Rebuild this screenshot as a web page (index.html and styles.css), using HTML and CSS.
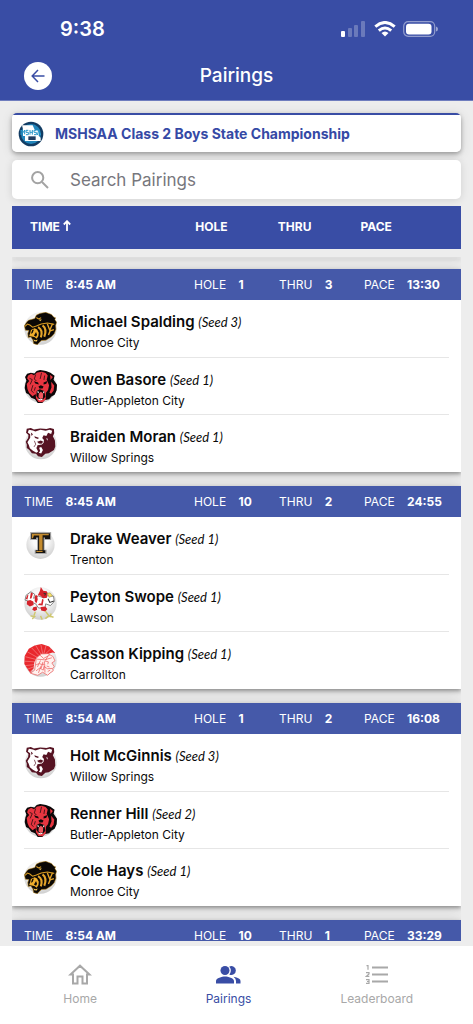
FILE: index.html
```html
<!DOCTYPE html>
<html lang="en">
<head>
<meta charset="utf-8">
<meta name="viewport" content="width=device-width, initial-scale=1">
<title>Pairings</title>
<link rel="stylesheet" href="styles.css">
</head>
<body>
<svg class="defs" aria-hidden="true">
  <defs>
    <radialGradient id="disc" cx="50%" cy="35%" r="65%">
      <stop offset="0.4" stop-color="#fafafa"/><stop offset="1" stop-color="#cfcfcf"/>
    </radialGradient>
    <symbol id="panther" viewBox="0 0 96 96">
      <circle cx="48" cy="48" r="47" fill="url(#disc)"/>
      <path fill="#0b0806" stroke="#c8921f" stroke-width="1.500" d="M1 40L8 29 13 24 31 19 36 9 46 4 63 1 80 7 87 15 92 17 90 22 95 30 92 39 93 50 88 63 80 72 64 82 51 83 43 90 39 95 28 92 26 82 20 73 12 74 11 62 14 54 4 53Z"/>
      <path fill="#f0ae2c" d="M20 52L31 47 38 51 43 60 42 70 37 78 30 73 22 71 15 70 18 61Z"/>
      <path fill="#0b0806" d="M24 52L29 51 25 61 20 63ZM29 68L35 58 38 66 35 72Z"/>
      <path fill="none" stroke="#e5a52a" stroke-width="6" d="M41 44Q56 52 49 74M54 39Q68 50 59 72"/>
      <path fill="none" stroke="#e5a52a" stroke-width="4" d="M68 35L75 53 83 34M71 67L76 55 87 51"/>
      <path fill="none" stroke="#d99c22" stroke-width="3" d="M3 42L10 35 17 38 25 44 36 41 50 35 68 32 88 36M36 16L42 20 50 17"/>
      <path fill="#f6c453" d="M43 22L52 22 47 27ZM27 79L33 82 40 80 37 86 30 85Z"/>
    </symbol>
    <symbol id="redbear" viewBox="0 0 96 96">
      <circle cx="48" cy="48" r="47" fill="url(#disc)"/>
      <path fill="#0c0708" d="M20 8L30 10 37 3 47 0 64 3 77 8 89 17 86 28 96 43 95 59 89 72 80 77 73 85 59 88 52 98 40 96 32 85 21 81 14 71 6 67 2 52 4 39 7 31 3 20 9 11Z"/>
      <path fill="#e83540" d="M12 16L21 11 29 15 38 7 52 5 63 9 69 16 66 28 73 44 70 58 64 66 63 86 54 94 42 93 35 82 34 70 25 76 15 67 10 55 8 41 15 32 9 24Z"/>
      <path fill="#e83540" d="M76 14L84 20 77 29ZM79 34L88 45 86 60 79 69 74 66 80 51Z"/>
      <path fill="#0c0708" d="M29 33L41 36 43 42 33 39ZM57 36L68 32 65 40 57 42ZM42 48L49 44 57 48 54 54 45 54ZM37 61L46 56 59 61 62 78 54 87 43 85 36 75Z"/>
      <path fill="none" stroke="#0c0708" stroke-width="2" d="M34 13L30 26 36 32M51 8L47 26M60 16L58 29M16 24L24 28 18 42M26 44L21 60 28 66M33 50L30 60"/>
      <path fill="#f15960" d="M43 68L49 63 56 68 55 82 48 84 42 79Z"/>
      <path fill="none" stroke="#fff" stroke-width="3" d="M40 62L42 67M58 62L57 67M42 84L46 87 54 85"/>
    </symbol>
    <symbol id="maroonbear" viewBox="0 0 96 96">
      <circle cx="49" cy="48" r="46" fill="url(#disc)"/>
      <path fill="#561322" d="M8 5L20 3 29 7 47 4 65 6 76 3 87 6 88 18 84 27 90 39 91 57 87 67 72 76 62 78 52 87 41 85 35 78 23 76 15 66 8 61 8 51 5 43 12 32 13 23 6 17Z"/>
      <path fill="#fff" d="M14 8L26 10 33 13 48 8 63 11 74 8 82 11 79 20 70 17 65 26 57 24 53 32 58 38 57 46 49 54 40 53 36 61 41 71 36 75 26 69 17 62 14 52 10 44 18 31 18 21 11 16Z"/>
      <path fill="#561322" d="M30 27L43 31 41 35 32 32ZM58 29L69 26 65 33 58 35ZM38 43L49 39 56 43 51 49 43 48ZM39 54L50 51 58 56 52 61 43 61ZM20 16L26 21 22 26Z"/>
      <path fill="#fff" d="M44 60L50 58 55 67 50 77 43 75 47 70ZM67 31L70 40 65 35Z"/>
      <path fill="none" stroke="#561322" stroke-width="2" d="M30 40L34 50 29 58"/>
    </symbol>
    <symbol id="lettert" viewBox="0 0 96 96">
      <circle cx="48" cy="46" r="41" fill="url(#disc)"/>
      <path fill="#aaa" d="M18 9H79V32H60V60H66V73H31V60H38V32H18Z"/>
      <path fill="#171411" d="M21 12H76V29H61V25H57V62H62V70H34V62H41V25H35V29H21Z"/>
      <path fill="#c38a2d" d="M23 14H72V18H54V62H44V19H29L26 27H23ZM36 64H54V67H36Z"/>
    </symbol>
    <symbol id="cardinal" viewBox="0 0 96 96">
      <circle cx="48" cy="48" r="47" fill="url(#disc)"/>
      <path fill="#fff" stroke="#555" stroke-width="2" d="M6 24L20 14 31 21 28 33 42 26 58 32 70 25 86 27 88 42 77 54 63 49 61 62 42 61 34 49 15 42 3 38Z"/>
      <path fill="#d5232b" d="M49 0L56 11 66 12 69 18 66 32 55 32 47 25 40 24 46 12ZM9 25L13 22 10 36 5 35ZM20 16L26 19 22 33 17 34ZM18 38L27 42 28 52 17 57 8 50 9 41ZM32 25L38 24 40 36 36 48 31 41ZM53 34L57 37 54 54 40 52 46 47 50 49ZM27 59L37 57 38 66 31 70 24 66ZM48 58L62 57 68 64 62 71 50 68Z"/>
      <path fill="#f6df67" stroke="#5c5120" stroke-width="1" d="M67 18L76 17 83 26 73 30Z"/>
      <path fill="none" stroke="#cfc76c" stroke-width="4" d="M33 72L29 83M62 70L72 83M19 84L31 86 24 93M62 92L72 84 86 88M79 77L75 88M48 84L53 95"/>
      <path fill="none" stroke="#303030" stroke-width="3" d="M57 18L63 20 60 25M70 34L75 45 87 41"/>
    </symbol>
    <symbol id="trojan" viewBox="0 0 96 96">
      <circle cx="48" cy="48" r="47" fill="url(#disc)"/>
      <path fill="#e9282d" d="M1 58L2 35 14 14 31 4 51 0 73 7 91 26 83 25 69 29 52 28 37 39 30 54 28 71 18 84Z"/>
      <path fill="none" stroke="#ffe4e2" stroke-width="1" d="M2 50L33 52M4 37L35 45M10 23L39 39M22 11L44 34M34 4L49 29M49 2L54 27M64 5L58 27M78 14L64 27M3 63L30 60M8 74L30 66M15 82L31 71"/>
      <path fill="#fff2ef" stroke="#ef5a5a" stroke-width="2" d="M36 41L50 29 69 28 84 36 90 49 81 55 88 66 83 71 85 78 76 84 69 91 54 82 40 91 19 85 31 76Z"/>
      <path fill="none" stroke="#ed5555" stroke-width="2" d="M38 44L60 46 81 40M46 32L57 42 75 32M34 61L44 57 57 61 61 49 71 52 69 59M35 78L46 70 56 76 58 65 68 72 82 71M66 64L74 67M60 57L61 83M48 48L39 67M50 63L42 84M69 80L76 76M70 34L63 47M55 52L50 71"/>
    </symbol>
  </defs>
</svg>

<div class="app">
  <header class="topbar">
    <div class="status">
      <span class="clock">9:38</span>
      <div class="status-icons">
        <svg width="26" height="16" viewBox="0 0 26 16" fill="#fff" aria-hidden="true"><rect x="0" y="10" width="4" height="6" rx="1"/><g opacity=".25"><rect x="7" y="7" width="4" height="9" rx="1"/><rect x="13" y="4" width="4" height="12" rx="1"/><rect x="20" y="0" width="4" height="16" rx="1"/></g></svg>
        <svg class="wifi" width="22" height="16" viewBox="0 0 22 16" aria-hidden="true"><g fill="none" stroke="#fff" stroke-width="3"><path d="M1.300 5.600Q11-2.600 20.700 5.600"/><path d="M4.800 9.600Q11 4.400 17.200 9.600"/></g><path fill="#fff" d="M11 15.500L7.500 12Q11 9 14.500 12Z"/></svg>
        <svg width="36" height="16" viewBox="0 0 36 16" aria-hidden="true"><rect x=".7" y=".7" width="31" height="14.600" rx="4.500" fill="none" stroke="#fff" stroke-opacity=".45" stroke-width="1.200"/><rect x="3" y="2.700" width="25.500" height="10.800" rx="3" fill="#fff"/><path d="M33 5.500Q35 6 35 8T33 10.500Z" fill="#fff" opacity=".5"/></svg>
      </div>
    </div>
    <div class="titlebar">
      <button class="back" type="button" aria-label="Back"><svg width="14" height="14" viewBox="0 0 14 14" fill="none" stroke="#394da5" stroke-width="1.500"><path d="M13.500 7H1.500M7 1L1.200 7 7 13"/></svg></button>
      <h1>Pairings</h1>
    </div>
  </header>

  <main class="content">
    <a class="event" href="#event">
      <svg width="26" height="26" viewBox="0 0 78 78" aria-hidden="true"><circle cx="39" cy="39" r="37" fill="#123c63"/><circle cx="39" cy="39" r="30" fill="#2286bb"/><path fill="#fff" d="M12 13H44L50 26 62 30 62 44 68 50V60H21V45H15V25Z"/><path fill="#203c60" d="M31 46H53V57H31Z"/><path fill="none" stroke="#2796c9" stroke-width="3" d="M9 42V27L15 35 20 27V40M31 28H24V34H31V41H24M36 27V41M36 34H43M43 27V41M55 28H48V34H55V41H48M58 42L62 28 68 42"/></svg>
      <span>MSHSAA Class 2 Boys State Championship</span>
    </a>
    <label class="search">
      <svg width="18" height="18" viewBox="0 0 18 18" fill="none" stroke="#a3a3a3" stroke-width="2" aria-hidden="true"><circle cx="6.700" cy="6.700" r="5.600"/><path d="M11 11L17 17"/></svg>
      <input type="search" placeholder="Search Pairings" aria-label="Search Pairings">
    </label>
    <div class="columns">
      <button type="button">TIME<svg width="8" height="12" viewBox="0 0 8 12" fill="none" stroke="#fff" stroke-width="1.800" aria-hidden="true"><path d="M4 11V1.500M.8 4.500L4 1.200 7.200 4.500"/></svg></button>
      <button type="button">HOLE</button><button type="button">THRU</button><button type="button">PACE</button>
    </div>

    <div class="list">
      <div class="card-end"></div>
      <section class="card">
        <div class="facts"><span>TIME <b>8:45 AM</b></span><span>HOLE <b>1</b></span><span>THRU <b>3</b></span><span>PACE <b>13:30</b></span></div>
        <ul>
          <li><svg class="logo"><use href="#panther"/></svg><div><h2>Michael Spalding <em>(Seed 3)</em></h2><p>Monroe City</p></div></li>
          <li><svg class="logo"><use href="#redbear"/></svg><div><h2>Owen Basore <em>(Seed 1)</em></h2><p>Butler-Appleton City</p></div></li>
          <li><svg class="logo"><use href="#maroonbear"/></svg><div><h2>Braiden Moran <em>(Seed 1)</em></h2><p>Willow Springs</p></div></li>
        </ul>
      </section>
      <section class="card">
        <div class="facts"><span>TIME <b>8:45 AM</b></span><span>HOLE <b>10</b></span><span>THRU <b>2</b></span><span>PACE <b>24:55</b></span></div>
        <ul>
          <li><svg class="logo"><use href="#lettert"/></svg><div><h2>Drake Weaver <em>(Seed 1)</em></h2><p>Trenton</p></div></li>
          <li><svg class="logo"><use href="#cardinal"/></svg><div><h2>Peyton Swope <em>(Seed 1)</em></h2><p>Lawson</p></div></li>
          <li><svg class="logo"><use href="#trojan"/></svg><div><h2>Casson Kipping <em>(Seed 1)</em></h2><p>Carrollton</p></div></li>
        </ul>
      </section>
      <section class="card">
        <div class="facts"><span>TIME <b>8:54 AM</b></span><span>HOLE <b>1</b></span><span>THRU <b>2</b></span><span>PACE <b>16:08</b></span></div>
        <ul>
          <li><svg class="logo"><use href="#maroonbear"/></svg><div><h2>Holt McGinnis <em>(Seed 3)</em></h2><p>Willow Springs</p></div></li>
          <li><svg class="logo"><use href="#redbear"/></svg><div><h2>Renner Hill <em>(Seed 2)</em></h2><p>Butler-Appleton City</p></div></li>
          <li><svg class="logo"><use href="#panther"/></svg><div><h2>Cole Hays <em>(Seed 1)</em></h2><p>Monroe City</p></div></li>
        </ul>
      </section>
      <section class="card">
        <div class="facts"><span>TIME <b>8:54 AM</b></span><span>HOLE <b>10</b></span><span>THRU <b>1</b></span><span>PACE <b>33:29</b></span></div>
      </section>
    </div>
  </main>

  <nav class="tabs">
    <a href="#home"><svg width="24" height="24" viewBox="0 0 24 24" fill="none" stroke="#a8a8a8" stroke-width="2" aria-hidden="true"><path d="M2.500 12.500H5V21.500H9.500V14.500H14.500V21.500H19V12.500H21.500L12 3.700Z"/></svg>Home</a>
    <a class="current" href="#pairings" aria-current="page"><svg width="26" height="24" viewBox="0 0 26 24" fill="#394da5" aria-hidden="true"><circle cx="10" cy="8.500" r="4.500"/><path d="M1 21.500V19C1 16 7 14.500 10 14.500S19 16 19 19V21.500ZM14.300 4.500A4.500 4.500 0 1 1 14.300 12.500Q17.300 8.500 14.300 4.500ZM18.500 14.700Q25.500 15.900 25.500 19V21.500H21V19Q21 16.500 18.500 14.700Z"/></svg>Pairings</a>
    <a href="#leaderboard"><svg width="24" height="24" viewBox="0 0 24 24" fill="none" stroke="#a8a8a8" aria-hidden="true"><path stroke-width="2" d="M7 5.500H23M7 12.500H23M7 19.500H23"/><path stroke-width="1.200" d="M1.500 3.600H3V7.700M1 10.600H4V12L1.300 14.400H4.300M1 17.600H4V21.400H1M2 19.500H4"/></svg>Leaderboard</a>
  </nav>
</div>
</body>
</html>
```
FILE: styles.css
```css
* { box-sizing: border-box; }

body {
  margin: 0;
  background: #ededed;
  color: #0a0a0a;
  font-family: Inter, Roboto, sans-serif;
}

h1, h2, p, ul { margin: 0; padding: 0; }
button { border: 0; padding: 0; background: none; font: inherit; color: inherit; }
a { color: inherit; text-decoration: none; }
svg { display: block; flex: none; }

.defs { position: absolute; width: 0; height: 0; }

.app { display: flex; flex-direction: column; height: 100vh; }

/* Top bar */
.topbar {
  padding: 17px 24px 10px;
  background: #394da5;
  color: #fff;
  border-bottom: 1px solid #6f7dbe;
}
.status { display: flex; justify-content: space-between; align-items: center; height: 24px; padding: 0 10px 0 36px; }
.clock { font-size: 20px; font-weight: 600; }
.status-icons { display: flex; align-items: center; gap: 7px; }
.titlebar { display: grid; grid-template-columns: 28px 1fr 28px; align-items: center; margin-top: 21px; }
.titlebar h1 { font-size: 19px; font-weight: 500; line-height: 28px; text-align: center; }
.back { display: grid; place-items: center; width: 28px; height: 28px; border-radius: 50%; background: #fff; }

/* Content */
.content { flex: 1; min-height: 0; display: flex; flex-direction: column; padding: 12px 12px 5px; }
.event {
  display: flex;
  align-items: center;
  gap: 11px;
  height: 39px;
  padding: 2px 6px 0;
  border-radius: 5px;
  background: linear-gradient(#394da5 2px, #fff 2px);
  box-shadow: 0 2px 4px rgba(0, 0, 0, .3), 0 2px 12px rgba(0, 0, 0, .12);
  color: #3549a5;
  font-size: 14px;
  font-weight: 700;
}
.search {
  display: flex;
  align-items: center;
  gap: 21px;
  height: 39px;
  margin-top: 8px;
  padding: 0 19px;
  border-radius: 5px;
  background: #fff;
  box-shadow: 0 1px 8px rgba(0, 0, 0, .12);
}
.search input { flex: 1; min-width: 0; padding: 0; border: 0; outline: 0; background: none; font: 17px Inter, sans-serif; }
.search input::placeholder { color: #77777d; opacity: 1; }

.columns, .facts { display: grid; grid-template-columns: 2fr 1fr 1fr 1fr; align-items: center; color: #fff; font-size: 12px; }
.columns { flex: none; height: 43px; margin: 7px 0; padding: 0 18px 3px; background: #394da5; font-weight: 700; }
.columns button { display: flex; align-items: center; gap: 3px; }

.list { flex: 1; min-height: 0; overflow: hidden; display: flex; flex-direction: column; gap: 14px; }
.list > * { flex: none; box-shadow: 0 2px 4px rgba(0, 0, 0, .35), 0 1px 12px rgba(0, 0, 0, .14); }
.card-end { height: 1px; margin-bottom: -2px; background: #ededed; }
.card { padding-bottom: 1px; background: #fff; }
.facts { height: 31px; padding: 0 12px; background: #4559a9; }
.facts b { margin-left: 9px; }
.card ul { list-style: none; padding: 0 12px; }
.card li { display: flex; align-items: flex-start; gap: 13px; height: 57px; padding-top: 12px; }
.card li + li { border-top: 1px solid #e6e6e6; }
.card li div { flex: 1; min-width: 0; }
.logo { width: 33px; height: 33px; }
.card h2 { font-size: 15px; font-weight: 600; line-height: 20px; }
.card em { font: italic 13px Lato, sans-serif; }
.card p { font-size: 12px; line-height: 22px; }

/* Tab bar */
.tabs {
  display: grid;
  grid-template-columns: repeat(3, 1fr);
  height: 78px;
  padding: 16px 22px 0 6px;
  background: #fff;
  color: #a8a8a8;
  font-size: 12px;
}
.tabs a { display: flex; flex-direction: column; align-items: center; gap: 5px; }
.tabs .current { color: #394da5; }
```
